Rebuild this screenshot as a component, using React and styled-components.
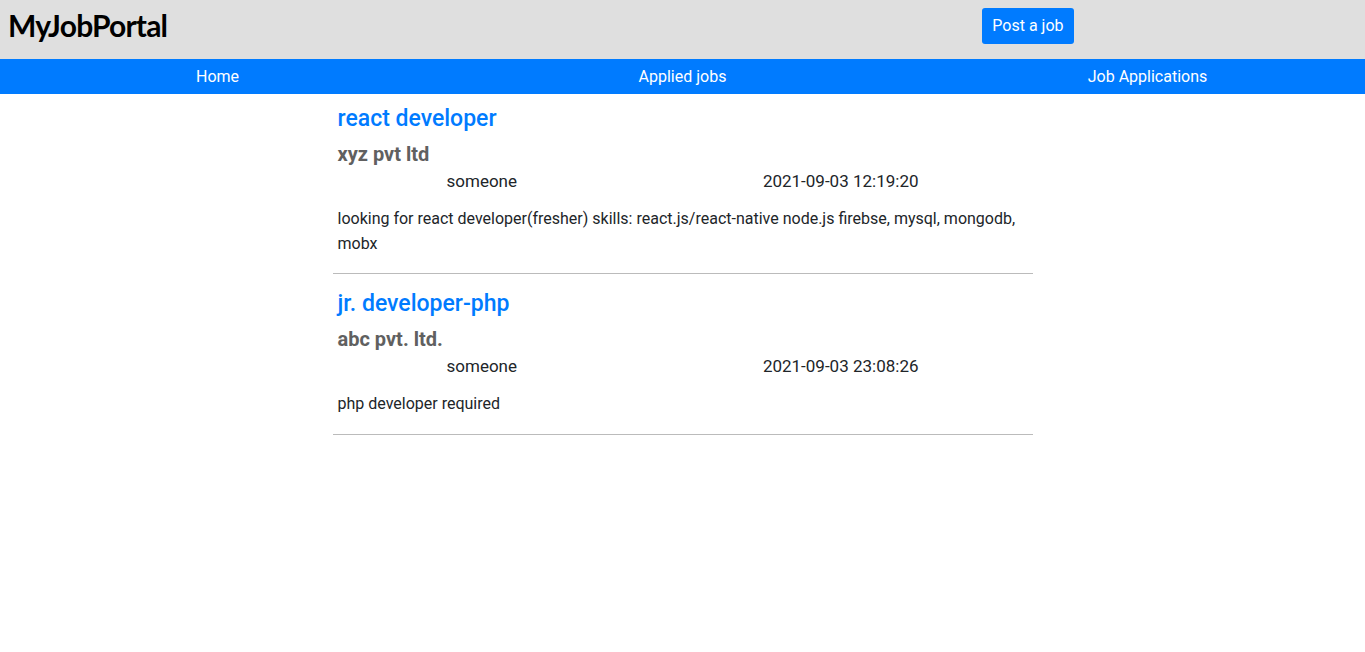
import React from "react";
import styled, { createGlobalStyle } from "styled-components";

const Global = createGlobalStyle`
  html, body { margin: 0; padding: 0; background: #fff; }
  body { font-family: Roboto, "Liberation Sans", Arial, sans-serif; font-size: 16px; color: #212529; }
  * { box-sizing: border-box; }
  html::-webkit-scrollbar { height: 10px; background: #fff; }
  html::-webkit-scrollbar-thumb { background: #858585; border-radius: 4px; border: 2px solid #fff; border-left-width: 3px; border-right-width: 20px; }
`;

const Header = styled.header`
  display: grid;
  grid-template-columns: 1fr auto 291px;
  align-items: start;
  height: 59px;
  padding-top: 8px;
  background: #dfdfdf;
`;

const Logo = styled.h1`
  margin: 0 0 0 8px;
  font-family: Lato, "Open Sans", sans-serif;
  font-weight: 700;
  font-size: 30px;
  line-height: 34px;
  color: #000;
  letter-spacing: -0.8px;
`;

const PostButton = styled.button`
  height: 36px;
  font-family: Roboto, sans-serif;
  font-size: 16px;
  line-height: 24px;
  padding: 6px 10.5px;
  border: none;
  border-radius: 3px;
  background: #007bff;
  color: #fff;
  cursor: pointer;
`;

const Nav = styled.nav`
  display: grid;
  grid-template-columns: repeat(3, 1fr);
  width: calc(100% + 30px);
  margin: 0 -15px;
  height: 35px;
  background: #007bff;
`;

const NavLink = styled.a`
  display: flex;
  align-items: center;
  justify-content: center;
  color: #fff;
  font-size: 16px;
  text-decoration: none;
  cursor: pointer;
`;

const List = styled.main`
  width: 700px;
  margin: 0 auto;
`;

const Card = styled.article`
  padding: 10px 5px 0;
`;

const Title = styled.h3`
  margin: 0;
  font-size: 23px;
  font-weight: 500;
  line-height: 30px;
  color: #007bff;
`;

const Company = styled.h4`
  margin: 8px 0 0;
  font-size: 20px;
  font-weight: 700;
  line-height: 24px;
  color: #606060;
`;

const Meta = styled.div`
  display: flex;
  justify-content: space-between;
  padding: 0 109px;
  margin-top: 3px;
  font-size: 17px;
  line-height: 25px;
  color: #212529;
`;

const Desc = styled.p`
  margin: 13px 0 0;
  line-height: 24.5px;
`;

const Divider = styled.hr`
  margin: 17px 0 5px;
  border: none;
  border-top: 1px solid #bbb;
`;

const jobs = [
  {
    title: "react developer",
    company: "xyz pvt ltd",
    by: "someone",
    date: "2021-09-03 12:19:20",
    desc: "looking for react developer(fresher) skills: react.js/react-native node.js firebse, mysql, mongodb, mobx",
  },
  {
    title: "jr. developer-php",
    company: "abc pvt. ltd.",
    by: "someone",
    date: "2021-09-03 23:08:26",
    desc: "php developer required",
  },
];

export default function App() {
  return (
    <>
      <Global />
      <Header>
        <Logo>MyJobPortal</Logo>
        <PostButton>Post a job</PostButton>
        <span />
      </Header>
      <Nav>
        <NavLink>Home</NavLink>
        <NavLink>Applied jobs</NavLink>
        <NavLink>Job Applications</NavLink>
      </Nav>
      <List>
        {jobs.map((j) => (
          <React.Fragment key={j.title}>
            <Card>
              <Title>{j.title}</Title>
              <Company>{j.company}</Company>
              <Meta>
                <span>{j.by}</span>
                <span>{j.date}</span>
              </Meta>
              <Desc>{j.desc}</Desc>
            </Card>
            <Divider />
          </React.Fragment>
        ))}
      </List>
    </>
  );
}
